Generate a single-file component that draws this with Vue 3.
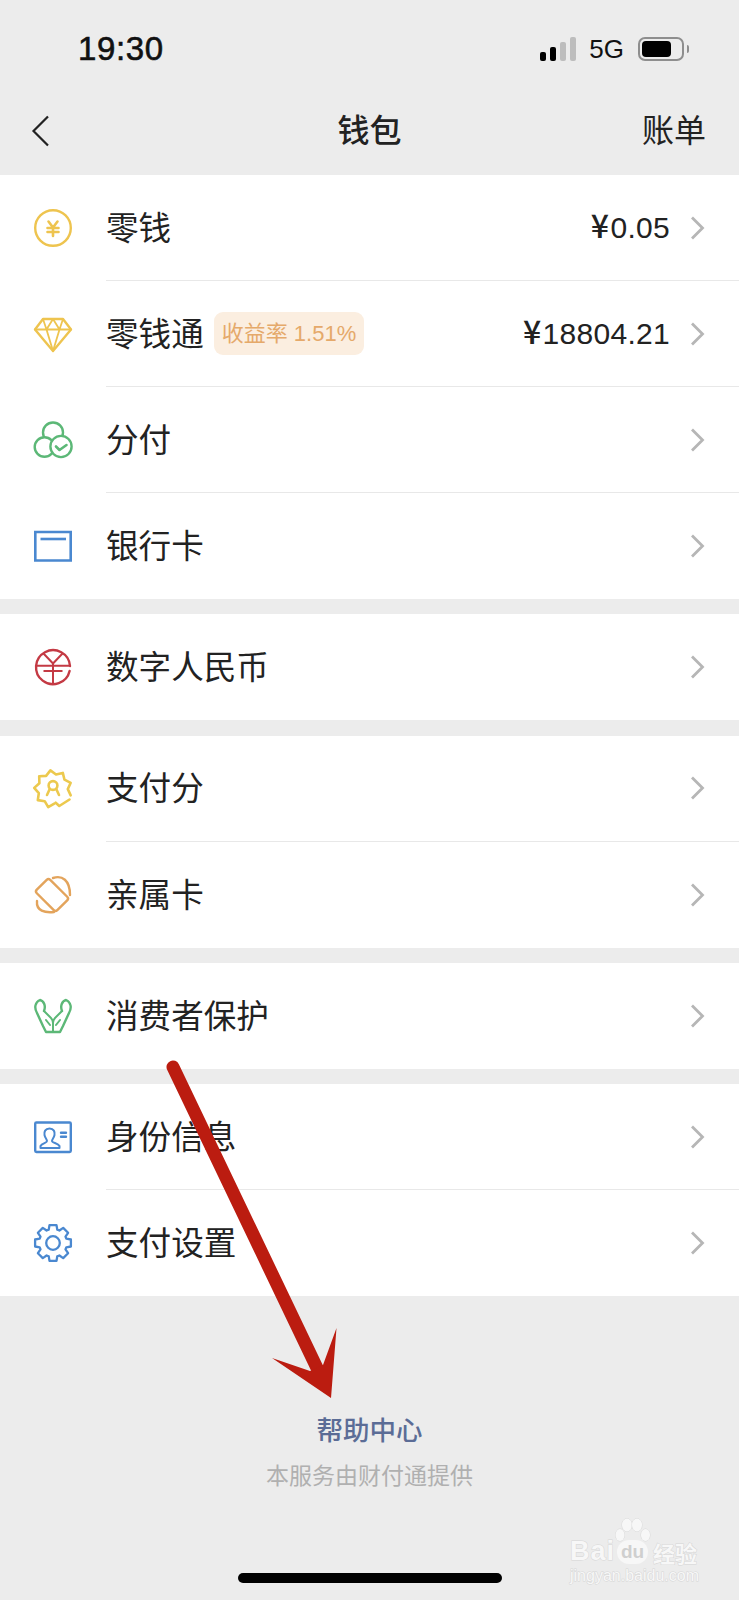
<script setup>
// 钱包页：分组菜单数据
const groups = [
  [
    { icon: 'coin', label: '零钱', amount: '0.05' },
    { icon: 'diamond', label: '零钱通', badge: '收益率 1.51%', amount: '18804.21' },
    { icon: 'clover', label: '分付' },
    { icon: 'card', label: '银行卡' },
  ],
  [{ icon: 'rmb', label: '数字人民币' }],
  [
    { icon: 'score', label: '支付分' },
    { icon: 'family', label: '亲属卡' },
  ],
  [{ icon: 'hands', label: '消费者保护' }],
  [
    { icon: 'idcard', label: '身份信息' },
    { icon: 'gear', label: '支付设置' },
  ],
]

const bars = [
  { h: 9, on: true },
  { h: 14, on: true },
  { h: 19, on: false },
  { h: 24, on: false },
]

// 支付分的波浪边，右下角留口给对勾
const wavy = (from, to, steps) => {
  const pts = []
  for (let i = 0; i <= steps; i++) {
    const a = ((from + ((to - from) * i) / steps) * Math.PI) / 180
    const r = i % 2 ? 18.8 : 14.8
    pts.push(`${(19 + r * Math.cos(a)).toFixed(1)},${(19 + r * Math.sin(a)).toFixed(1)}`)
  }
  return pts.join(' ')
}
const scorePoints = wavy(85, 380, 15)

// 齿轮外形
const gearPath = (() => {
  const out = []
  for (let i = 0; i < 8; i++) {
    const base = i * 45 - 90
    const pt = (deg, r) => {
      const a = (deg * Math.PI) / 180
      return `${(19 + r * Math.cos(a)).toFixed(1)} ${(19 + r * Math.sin(a)).toFixed(1)}`
    }
    out.push((i ? 'L' : 'M') + pt(base - 11, 18.2))
    out.push('L' + pt(base + 11, 18.2))
    out.push('L' + pt(base + 18, 14))
    out.push('L' + pt(base + 27, 14))
  }
  return out.join(' ') + ' Z'
})()
</script>

<template>
  <div class="page">
    <div class="status">
      <span class="time">19:30</span>
      <div class="signal">
        <i v-for="(b, i) in bars" :key="i" :class="{ on: b.on }" :style="{ height: b.h + 'px' }"></i>
      </div>
      <span class="net">5G</span>
      <div class="battery"><b></b></div>
      <div class="nub"></div>
    </div>

    <div class="nav">
      <svg class="back" width="20" height="32" viewBox="0 0 20 32">
        <polyline points="18,1.5 3.5,16 18,30.5" fill="none" stroke="#222" stroke-width="2.2" />
      </svg>
      <div class="title">钱包</div>
      <div class="bill">账单</div>
    </div>

    <div v-for="(group, g) in groups" :key="g" class="group">
      <div v-for="item in group" :key="item.label" class="row">
        <svg class="icon" width="38" height="38" viewBox="0 0 38 38" fill="none" stroke-linecap="round" stroke-linejoin="round">
          <g v-if="item.icon === 'coin'" stroke="#eec44f" stroke-width="2.4">
            <circle cx="19" cy="19" r="17.8" />
            <path d="M14.5 12.5 19 18.5 23.5 12.5M13.5 19H24.5M13.5 23H24.5M19 18.5V27" stroke-width="2.6" />
          </g>
          <g v-else-if="item.icon === 'diamond'" stroke="#eec44f" stroke-width="2.4">
            <path d="M9 4H29L37 14.5 19 36 1 14.5Z" />
            <path d="M1 14.5H37M9 4 12.5 14.5 19 36 25.5 14.5 29 4M12.5 14.5 19 4 25.5 14.5" stroke-width="1.8" />
          </g>
          <g v-else-if="item.icon === 'clover'" stroke="#5cb877" stroke-width="2.4" fill="#fff">
            <circle cx="19" cy="11.5" r="10" />
            <circle cx="10.5" cy="26" r="9.8" />
            <circle cx="27" cy="25.5" r="10.6" />
            <path d="M22 25.5 25.5 29 32.5 24" fill="none" stroke-width="2.6" />
          </g>
          <g v-else-if="item.icon === 'card'" stroke="#4a88d0" stroke-width="2.6">
            <path d="M1.3 5H36.7V33.5H1.3Z" stroke-linejoin="miter" />
            <path d="M6.5 12H32" stroke-linecap="butt" />
          </g>
          <g v-else-if="item.icon === 'rmb'" stroke="#c43a44" stroke-width="2.4">
            <path d="M35.6 23A17 17 0 1 1 36 18" />
            <path d="M9.5 5.5 19 15.5 28.5 5.5M2 17.8H36M9.5 23H28.5M19 15.5V36" stroke-linecap="butt" stroke-width="2" />
          </g>
          <g v-else-if="item.icon === 'score'" stroke="#ecc94e" stroke-width="2.6">
            <polyline :points="scorePoints" />
            <path d="M21.7 32.7 25.3 36 35.5 29.5" stroke-width="2.6" />
            <circle cx="19" cy="15.5" r="4.4" />
            <path d="M15.5 19.5 13 25M22.5 19.5 25 25" />
          </g>
          <g v-else-if="item.icon === 'family'" stroke="#e3a45c" stroke-width="2.4">
            <rect x="3.5" y="9.5" width="29" height="19" rx="2.5" transform="rotate(45 18 19)" />
            <path d="M19 2C28 -1 36 4 36 19" />
            <path d="M3 25C2 35 11 37 20 36" />
          </g>
          <g v-else-if="item.icon === 'hands'" stroke="#5cb877" stroke-width="2.4">
            <path d="M10 14C12 9 10 4 6 3 1 5 0 11 3 16L9 29 12 35H26L29 29 35 16C38 11 37 5 32 3 28 4 26 9 28 14" />
            <path d="M10 14 17 21C18.5 22.5 19 24 19 26M28 14 21 21C19.5 22.5 19 24 19 26V34M12 23 16 28M26 23 22 28" stroke-width="2" />
          </g>
          <g v-else-if="item.icon === 'idcard'" stroke="#4a88d0" stroke-width="2.4">
            <rect x="1.2" y="4.5" width="35.6" height="29.5" rx="1.2" />
            <path d="M15.5 10.5C11 10.5 10 14 10.5 17 11 20 13 21 13 23 13 25 8 25 6.5 28V30H25.5V28C24 25 18 25 18 23 18 21 20 20 20.5 17 21 14 20 10.5 15.5 10.5Z" stroke-width="2" />
            <path d="M27 14.7H32M27 18.7H32" />
          </g>
          <g v-else-if="item.icon === 'gear'" stroke="#4a88d0" stroke-width="2.3">
            <path :d="gearPath" />
            <circle cx="19" cy="19" r="6.8" />
          </g>
        </svg>
        <div class="row-body">
          <span class="label">{{ item.label }}</span>
          <span v-if="item.badge" class="badge">{{ item.badge }}</span>
          <span v-if="item.amount" class="amount"><span class="yen">¥</span>{{ item.amount }}</span>
          <svg class="chevron" width="15" height="24" viewBox="0 0 15 24">
            <polyline points="2,1.5 12.5,12 2,22.5" fill="none" stroke="#b6b6b6" stroke-width="2.8" />
          </svg>
        </div>
      </div>
    </div>

    <div class="footer">
      <div class="help">帮助中心</div>
      <div class="provider">本服务由财付通提供</div>
      <div class="home-bar"></div>
    </div>

    <!-- 截图上的标注箭头 -->
    <svg class="arrow" width="739" height="1600" viewBox="0 0 739 1600">
      <path d="M173 1067 317 1368" stroke="#bb1c10" stroke-width="13" stroke-linecap="round" fill="none" />
      <path d="M272 1358 310 1371 323 1365 336.5 1328 331 1398Z" fill="#bb1c10" />
    </svg>

    <div class="watermark">
      <svg class="paw" width="36" height="28" viewBox="0 0 36 28" fill="#f7f7f7" stroke="#dadada">
        <ellipse cx="5" cy="17" rx="4.5" ry="6" />
        <ellipse cx="12" cy="7" rx="5" ry="6.5" />
        <ellipse cx="22" cy="7" rx="5" ry="6.5" />
        <ellipse cx="30.5" cy="17" rx="4.5" ry="6" />
      </svg>
      <div class="wm-top">
        <span class="wm-bai">Bai</span>
        <span class="wm-du">du</span>
        <span class="wm-cn">经验</span>
      </div>
      <div class="wm-url">jingyan.baidu.com</div>
    </div>
  </div>
</template>

<style scoped>
.page {
  position: relative;
  width: 739px;
  height: 1600px;
  overflow: hidden;
  background: #ececec;
  color: #222;
  font-family: "Liberation Sans", "Noto Sans CJK SC", sans-serif;
}

.status {
  height: 98px;
  display: flex;
  align-items: center;
  padding: 0 50px 0 78px;
  box-sizing: border-box;
  color: #111;
}
.time {
  font-size: 33px;
  font-weight: 500;
  letter-spacing: 0.6px;
  -webkit-text-stroke: 0.6px #111;
  margin-right: auto;
}
.signal {
  display: flex;
  align-items: flex-end;
  gap: 4px;
  height: 24px;
}
.signal i {
  display: block;
  width: 6px;
  border-radius: 2px;
  background: #bdbdbd;
}
.signal i.on {
  background: #000;
}
.net {
  font-size: 26px;
  margin-left: 13px;
}
.battery {
  width: 46px;
  height: 24px;
  box-sizing: border-box;
  margin-left: 14px;
  padding: 2px;
  border: 2px solid #8e8e8e;
  border-radius: 7px;
}
.battery b {
  display: block;
  width: 29px;
  height: 16px;
  border-radius: 4px;
  background: #000;
}
.nub {
  width: 2px;
  height: 8px;
  margin-left: 3px;
  border-radius: 0 2px 2px 0;
  background: #8e8e8e;
}

.nav {
  height: 66px;
  margin-bottom: 11px;
  padding: 0 33px;
  display: grid;
  grid-template-columns: 1fr auto 1fr;
  align-items: center;
}
.back {
  display: block;
  margin-left: -3px;
}
.title {
  font-size: 32px;
  font-weight: 500;
  line-height: 40px;
}
.bill {
  font-size: 32px;
  line-height: 40px;
  text-align: right;
}

.group {
  background: #fff;
  margin-bottom: 15.3px;
}
.row {
  height: 106px;
  display: flex;
  align-items: center;
  padding-left: 34px;
}
.icon {
  flex: none;
  margin-right: 34px;
  overflow: visible;
}
.row-body {
  flex: 1;
  height: 100%;
  display: flex;
  align-items: center;
  padding-right: 34px;
  box-sizing: border-box;
  border-bottom: 1px solid #e8e8e8;
}
.row:last-child .row-body {
  border-bottom: none;
}
.label {
  font-size: 32.6px;
  line-height: 40px;
  padding-top: 2px;
  color: #222;
}
.badge {
  margin-left: 10px;
  padding: 0 8px;
  height: 43px;
  line-height: 43px;
  border-radius: 9px;
  background: #fbeee0;
  color: #e5a96a;
  font-size: 22px;
  white-space: nowrap;
}
.amount {
  margin-left: auto;
  font-size: 30px;
  line-height: 40px;
  letter-spacing: 0.3px;
  color: #222;
}
.yen {
  font-family: "Noto Sans CJK SC", sans-serif;
  font-size: 32px;
  line-height: 0;
  font-weight: 500;
  margin-right: 1px;
}
.chevron {
  flex: none;
  margin-left: 20px;
}
.row-body > .chevron:nth-child(2) {
  margin-left: auto;
}

.footer {
  display: flex;
  flex-direction: column;
  align-items: center;
  padding-top: 102px;
}
.help {
  font-size: 26.5px;
  font-weight: 500;
  line-height: 36px;
  color: #5b6c96;
}
.provider {
  margin-top: 11px;
  font-size: 23px;
  line-height: 32px;
  color: #b0b0b0;
}
.home-bar {
  margin-top: 81px;
  width: 264px;
  height: 10px;
  border-radius: 5px;
  background: #000;
}

.arrow {
  position: absolute;
  left: 0;
  top: 0;
  pointer-events: none;
}

.watermark {
  position: absolute;
  left: 570px;
  top: 1540px;
  width: 134px;
  color: #f7f7f7;
  -webkit-text-stroke: 1px #d6d6d6;
  paint-order: stroke fill;
}
.paw {
  position: absolute;
  left: 45px;
  top: -22px;
}
.wm-top {
  display: flex;
  align-items: center;
  height: 23px;
}
.wm-bai {
  flex: none;
  font-size: 27px;
  font-weight: 700;
  letter-spacing: 1px;
  width: 47px;
}
.wm-du {
  flex: none;
  width: 31px;
  height: 24px;
  line-height: 23px;
  border-radius: 12px;
  background: #f7f7f7;
  color: #cfcfcf;
  -webkit-text-stroke: 0;
  font-size: 19px;
  font-weight: 700;
  text-align: center;
}
.wm-cn {
  flex: none;
  margin-left: 5px;
  font-size: 22px;
  font-weight: 700;
  white-space: nowrap;
}
.wm-url {
  margin-top: 3px;
  font-size: 16px;
  line-height: 20px;
  white-space: nowrap;
}
</style>

<style>
body {
  background: #ececec;
}
</style>
